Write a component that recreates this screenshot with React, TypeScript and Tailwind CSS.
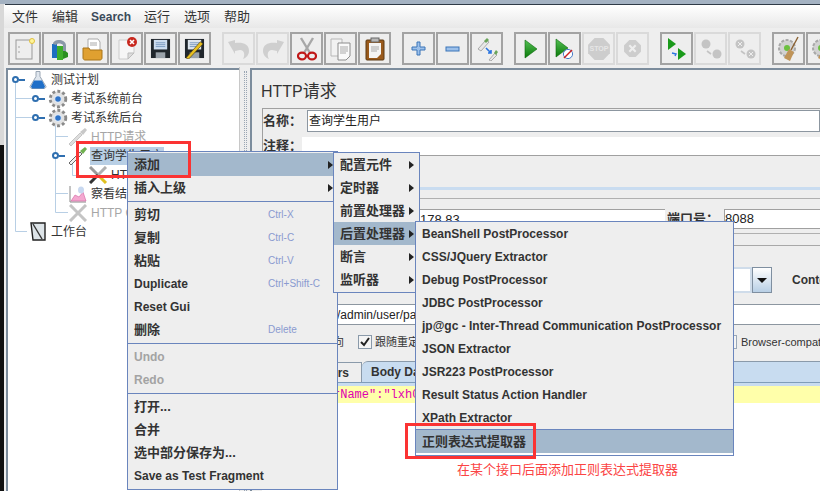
import type { ReactNode } from "react";

const ui = "font-['Liberation_Sans','Noto_Sans_CJK_SC',sans-serif]";

// toolbar icons, drawn small
const Sheet = () => (
  <svg width="22" height="24" viewBox="0 0 22 24">
    <rect x="2" y="3" width="16" height="19" fill="#eee" stroke="#999" />
    <circle cx="18" cy="4" r="2.5" fill="#fff59a" stroke="#e0c040" />
    <circle cx="5" cy="10" r="0.7" fill="#888" />
    <circle cx="5" cy="15" r="0.7" fill="#888" />
  </svg>
);
const Books = () => (
  <svg width="24" height="24" viewBox="0 0 24 24">
    <path d="M5 7h5v14H5z" fill="#1e6fc0" />
    <path d="M10 9h6v14h-6z" fill="#3dae2b" />
    <path d="M16 12l5 4v4l-5 2z" fill="#2a8f20" />
    <path d="M6 7c0-5 12-6 13 1v6h-3V8c-2-2-6-2-7 0z" fill="#8a98a8" />
  </svg>
);
const Folder = () => (
  <svg width="24" height="24" viewBox="0 0 24 24">
    <path d="M7 2h10l2 3v9H7z" fill="#fff" stroke="#aaa" />
    <path d="M9 6h7M9 8h7" stroke="#aaa" />
    <path d="M2 11h6l1 2h12v8c0 1-1 2-2 2H4c-1 0-2-1-2-2z" fill="#e0a030" stroke="#a87418" />
  </svg>
);
const CloseDoc = () => (
  <svg width="24" height="24" viewBox="0 0 24 24">
    <path d="M4 3h15v13l-6 6H4z" fill="#f6f6f6" stroke="#ccc" />
    <path d="M13 22v-6h6z" fill="#ddd" stroke="#bbb" />
    <circle cx="17" cy="5" r="5" fill="#c8281e" />
    <path d="M15 3l4 4M19 3l-4 4" stroke="#fff" strokeWidth="1.6" />
  </svg>
);
const Floppy = ({ pen }: { pen?: boolean }) => (
  <svg width="21" height="21" viewBox="0 0 22 22">
    <path d="M1 1h20v20H1z" fill="#20262c" />
    <rect x="4" y="2" width="14" height="10" fill={pen ? "#dfe6ee" : "#cdddf0"} />
    <path d="M6 5h10M6 7h10M6 9h10" stroke="#7a9ac0" />
    <rect x="6" y="15" width="10" height="6" fill="#9aa2aa" />
    {pen && <path d="M2 21L17 4l3 2L5 22z" fill="#e8c020" stroke="#3a2c10" strokeWidth="0.6" />}
  </svg>
);
const Curve = ({ flip }: { flip?: boolean }) => (
  <svg width="24" height="22" viewBox="0 0 24 22" style={flip ? { transform: "scaleX(-1)" } : undefined}>
    <path d="M1 4l7-2v3c8-1 14 1 14 8 0 4-3 7-6 8 2-3 2-9-3-9l-5 1v3z" fill="#cfcfcf" />
  </svg>
);
const Scissors = () => (
  <svg width="20" height="24" viewBox="0 0 20 24" fill="none">
    <path d="M4 1l9 15M16 1L7 16" stroke="#a8a8a8" strokeWidth="2.4" />
    <ellipse cx="5" cy="19" rx="4" ry="3.4" stroke="#c01818" strokeWidth="2.2" />
    <ellipse cx="15" cy="19" rx="4" ry="3.4" stroke="#c01818" strokeWidth="2.2" />
  </svg>
);
const Copy = () => (
  <svg width="24" height="24" viewBox="0 0 24 24">
    <path d="M2 2h11v17H2z" fill="#f2f2f2" stroke="#b8b8b8" />
    <path d="M9 6h12v13l-4 4H9z" fill="#fafafa" stroke="#8c8c8c" />
    <path d="M11 10h8M11 12h8M11 14h8M11 16h6" stroke="#aaa" />
  </svg>
);
const Clipboard = () => (
  <svg width="22" height="24" viewBox="0 0 22 24">
    <rect x="2" y="3" width="18" height="20" rx="1" fill="#9a5a1c" stroke="#5c3a14" />
    <path d="M5 6h12v11l-4 4H5z" fill="#f4f4f4" />
    <path d="M7 10h8M7 12h8M7 14h6" stroke="#aaa" />
    <rect x="7" y="1" width="8" height="4" fill="#b8b8b8" stroke="#666" />
  </svg>
);
const Plus = () => (
  <svg width="15" height="15" viewBox="0 0 15 15">
    <path d="M6 1h3v5h5v3H9v5H6V9H1V6h5z" fill="#9cc0ea" stroke="#3a74b8" />
  </svg>
);
const Minus = () => (
  <svg width="15" height="6" viewBox="0 0 15 6">
    <rect x="1" y="1" width="13" height="4" fill="#9cc0ea" stroke="#3a74b8" />
  </svg>
);
const Toggle = () => (
  <svg width="24" height="24" viewBox="0 0 24 24">
    <path d="M3 12l8-9 3 2-8 9z" fill="#e8e8e8" stroke="#aaa" />
    <path d="M9 4l3-3 2 2-3 3z" fill="#6aa55a" />
    <path d="M11 11l5 5M16 13v3h-3" stroke="#2a74e0" strokeWidth="1.6" fill="none" />
    <path d="M14 23l6-7 2 2-6 6z" fill="#e8e8e8" stroke="#aaa" />
    <path d="M19 16l2-3 2 2-2 3z" fill="#6aa55a" />
  </svg>
);
const Play = () => (
  <svg width="14" height="20" viewBox="0 0 14 20">
    <defs>
      <linearGradient id="g" x1="0" x2="0" y1="0" y2="1">
        <stop offset="0" stopColor="#55c055" />
        <stop offset="1" stopColor="#0a7a0a" />
      </linearGradient>
    </defs>
    <path d="M1 1l12 9L1 19z" fill="url(#g)" stroke="#0a6a0a" strokeWidth="0.6" />
  </svg>
);
const PlayNoTimer = () => (
  <svg width="20" height="22" viewBox="0 0 20 22">
    <path d="M1 1l12 9L1 19z" fill="url(#g)" stroke="#0a6a0a" strokeWidth="0.6" />
    <circle cx="13" cy="16" r="4.6" fill="#fff" stroke="#4a7cc8" />
    <path d="M9 20l8-8" stroke="#d02020" strokeWidth="1.4" />
  </svg>
);
const Stop = () => (
  <svg width="24" height="24" viewBox="0 0 22 22">
    <path d="M7 1h8l6 6v8l-6 6H7l-6-6V7z" fill="#cdcdcd" />
    <text x="11" y="13" textAnchor="middle" fontSize="6.5" fontWeight="700" fill="#e6e6e6" fontFamily="Liberation Sans">STOP</text>
  </svg>
);
const Shutdown = () => (
  <svg width="19" height="19" viewBox="0 0 18 18">
    <path d="M6 1h6l5 5v6l-5 5H6l-5-5V6z" fill="#cdcdcd" />
    <path d="M6 6l6 6M12 6l-6 6" stroke="#eee" strokeWidth="2" />
  </svg>
);
const RemoteStart = () => (
  <svg width="20" height="24" viewBox="0 0 20 24">
    <path d="M1 1l8 6-8 6z" fill="#1a9a1a" />
    <path d="M11 11l8 6-8 6z" fill="#1a9a1a" />
    <path d="M5 16l4 1-1 2" stroke="#2a74e0" fill="none" strokeWidth="1.4" />
  </svg>
);
const RemoteOff = ({ x }: { x?: boolean }) => (
  <svg width="22" height="22" viewBox="0 0 22 22">
    <circle cx="6" cy="6" r="4.5" fill="#c4c4c4" />
    <circle cx="17" cy="16" r="4.5" fill="#c4c4c4" />
    <path d="M7 13l4 3" stroke="#c4c4c4" strokeWidth="1.6" />
    {x && <path d="M4 4l4 4M8 4l-4 4M15 14l4 4M19 14l-4 4" stroke="#eee" />}
  </svg>
);
const Broom = () => (
  <svg width="26" height="26" viewBox="0 0 26 26">
    <circle cx="11" cy="12" r="8" fill="#d2d2d2" stroke="#a8a8a8" strokeDasharray="3 1.5" strokeWidth="2" />
    <circle cx="11" cy="12" r="3" fill="#6cc040" />
    <path d="M22 1l-7 13" stroke="#8a6030" strokeWidth="1.4" />
    <path d="M13 13l5 3-4 9-6-3z" fill="#c09458" />
  </svg>
);

const ToolButton = ({ children, off }: { children: ReactNode; off?: boolean }) => (
  <div className={`w-[33px] h-[33px] mr-px shrink-0 flex items-center justify-center border-2 bg-[#eeeeee] ${off ? "border-[#dadada]" : "border-[#a3a3a3]"}`}>
    {children}
  </div>
);

// tree icons
const Flask = () => (
  <svg width="18" height="19" viewBox="0 0 18 18">
    <path d="M7 1h4v5l6 10c0 1-1 2-2 2H3c-1 0-2-1-2-2L7 6z" fill="#dfe6ee" stroke="#9aa6b4" />
    <path d="M5 10h8l3 6-1 2H3l-1-2z" fill="#1f6fc8" />
  </svg>
);
const Gear = () => (
  <svg width="20" height="20" viewBox="0 0 18 18" className="shrink-0">
    <circle cx="9" cy="9" r="7" fill="#e2e2e2" stroke="#8a8a8a" strokeWidth="2.6" strokeDasharray="2.6 2" />
    <circle cx="9" cy="9" r="3" fill="#2f74c8" stroke="#dfe8f4" />
  </svg>
);
const Dropper = ({ off }: { off?: boolean }) => (
  <svg width="20" height="20" viewBox="0 0 20 20" className="shrink-0">
    <path d="M1 17L12 6l2 2L3 19z" fill={off ? "#ddd" : "#f0f0f0"} stroke={off ? "#bbb" : "#444"} strokeWidth="0.8" />
    <path d="M12 5l5-4 2 2-4 5z" fill={off ? "#c8c8c8" : "#70b050"} />
  </svg>
);
const Tools = ({ off }: { off?: boolean }) => (
  <svg width="20" height="18" viewBox="0 0 20 18" fill="none" className="shrink-0">
    <path d="M2 1l8 8" stroke={off ? "#c4c4c4" : "#9a9a9a"} strokeWidth="3" />
    <path d="M10 9l8 8" stroke={off ? "#c4c4c4" : "#e0c020"} strokeWidth="3" />
    <path d="M18 1l-8 8" stroke={off ? "#c4c4c4" : "#b0b0b0"} strokeWidth="3" />
    <path d="M10 9l-8 8" stroke={off ? "#c4c4c4" : "#333333"} strokeWidth="3" />
  </svg>
);
const ChartIcon = () => (
  <svg width="18" height="18" viewBox="0 0 18 18">
    <path d="M1 1v16h16" stroke="#888" fill="none" />
    <path d="M2 16l4-6 4 2 4-5 3 9z" fill="#f4a8d0" stroke="#d060a0" strokeWidth="0.6" />
    <ellipse cx="12" cy="5" rx="3" ry="3.5" fill="#c8d8f0" />
  </svg>
);
const Bench = () => (
  <svg width="16" height="19" viewBox="0 0 16 19">
    <path d="M1 1h14v17H3z" fill="#dde4e8" stroke="#222" strokeWidth="1.4" />
    <path d="M3 2l9 15" stroke="#333" strokeWidth="1.4" />
  </svg>
);

type TreeRowProps = { icon: ReactNode; label: string; indent: string; dim?: boolean; knob?: boolean; selected?: boolean };

const TreeRow = ({ icon, label, indent, dim, knob, selected }: TreeRowProps) => (
  <div className={`relative h-[19px] flex items-center gap-[3px] whitespace-nowrap ${indent}`}>
    {knob && (
      <span className="absolute -ml-[17px] flex items-center">
        <span className="w-[7px] h-[7px] rounded-full border-2 border-[#2f6fb0] bg-white" />
        <span className="w-[6px] h-[2px] bg-[#2f6fb0]" />
      </span>
    )}
    <span className="w-[18px] flex justify-center shrink-0">{icon}</span>
    <span className={`text-[12px] px-px h-[18px] leading-[18px] ${dim ? "text-[#a6a6a6]" : "text-[#333333]"} ${selected ? "bg-[#b8cfe5]" : ""}`}>{label}</span>
  </div>
);

const Tree = () => (
  <div className="relative w-[233px] ml-[2px] mt-px shrink-0 border-t-2 border-l-2 border-[#7c8c9c] bg-white overflow-hidden">
    {/* connector lines, panel origin is at 8,70 */}
    <svg className="absolute left-0 top-0" width="120" height="180" fill="none" stroke="#b8cfe5">
      <path d="M7.5 13V161.5H19M7.5 28.5H24M7.5 47.5H24M47.5 52V142.5H60M47.5 66.5H60M47.5 123.5H60M64.5 90V105.5H80" />
    </svg>
    <TreeRow icon={<Flask />} label="测试计划" indent="pl-[21px]" knob />
    <TreeRow icon={<Gear />} label="考试系统前台" indent="pl-[41px]" knob />
    <TreeRow icon={<Gear />} label="考试系统后台" indent="pl-[41px]" knob />
    <TreeRow icon={<Dropper off />} label="HTTP请求" indent="pl-[61px]" dim />
    <TreeRow icon={<Dropper />} label="查询学生用户" indent="pl-[61px]" knob selected />
    <TreeRow icon={<Tools />} label="HTTP信息头管理器" indent="pl-[81px]" />
    <TreeRow icon={<ChartIcon />} label="察看结果树" indent="pl-[61px]" />
    <TreeRow icon={<Tools off />} label="HTTP Cookie 管理器" indent="pl-[61px]" dim />
    <TreeRow icon={<Bench />} label="工作台" indent="pl-[21px]" />
  </div>
);

type MenuItemProps = { label: string; hint?: string; arrow?: boolean; dim?: boolean; active?: boolean; cjk?: boolean };

const MenuItem = ({ label, hint, arrow, dim, active, cjk }: MenuItemProps) => (
  <div className={`h-[23px] flex items-center justify-between whitespace-nowrap ${active ? "bg-[#a3b8cc]" : ""}`}>
    <span className={`font-bold ${cjk ? "text-[13px]" : "text-[12px]"} ${dim ? "text-[#a3a3a3]" : "text-[#333333]"}`}>{label}</span>
    {hint && <span className="text-[10px] text-[#8a9ad0] w-[69px] shrink-0">{hint}</span>}
    {arrow && <span className="w-0 h-0 border-y-[4px] border-y-transparent border-l-[5px] border-l-[#222222]" />}
  </div>
);

const Divider = () => <div className="h-px bg-[#6a85bd]" />;

const MainMenu = () => (
  <div className={`absolute left-[127px] top-[151px] w-[211px] border border-[#6a85bd] bg-[#eeeeee] ${ui}`}>
    <div className="pt-px pb-[2px] [&>div]:pl-[6px] [&>div]:pr-[4px]">
      <MenuItem label="添加" arrow active cjk />
      <MenuItem label="插入上级" arrow cjk />
    </div>
    <Divider />
    <div className="pt-[2px] pb-px pl-[6px] [&>div]:pb-[2px]">
      <MenuItem label="剪切" hint="Ctrl-X" cjk />
      <MenuItem label="复制" hint="Ctrl-C" cjk />
      <MenuItem label="粘贴" hint="Ctrl-V" cjk />
      <MenuItem label="Duplicate" hint="Ctrl+Shift-C" />
      <MenuItem label="Reset Gui" />
      <MenuItem label="删除" hint="Delete" cjk />
    </div>
    <Divider />
    <div className="pt-[2px] pb-px px-[6px] [&>div]:pb-[2px]">
      <MenuItem label="Undo" dim />
      <MenuItem label="Redo" dim />
    </div>
    <Divider />
    <div className="pt-[2px] pb-px px-[6px] [&>div]:pb-[2px]">
      <MenuItem label="打开..." cjk />
      <MenuItem label="合并" cjk />
      <MenuItem label="选中部分保存为..." cjk />
      <MenuItem label="Save as Test Fragment" />
    </div>
  </div>
);

const SubMenu = () => (
  <div className={`absolute left-[333px] top-[152px] w-[87px] border border-[#6a85bd] bg-[#eeeeee] pb-px ${ui} [&>div]:pl-[6px] [&>div]:pr-[5px]`}>
    <MenuItem label="配置元件" arrow cjk />
    <MenuItem label="定时器" arrow cjk />
    <MenuItem label="前置处理器" arrow cjk />
    <MenuItem label="后置处理器" arrow active cjk />
    <MenuItem label="断言" arrow cjk />
    <MenuItem label="监听器" arrow cjk />
  </div>
);

const PostMenu = () => (
  <div className={`absolute left-[415px] top-[221px] w-[319px] border border-[#6a85bd] bg-[#eeeeee] ${ui}`}>
    <div className="[&>div]:px-[6px]">
      <MenuItem label="BeanShell PostProcessor" />
      <MenuItem label="CSS/JQuery Extractor" />
      <MenuItem label="Debug PostProcessor" />
      <MenuItem label="JDBC PostProcessor" />
      <MenuItem label="jp@gc - Inter-Thread Communication PostProcessor" />
      <MenuItem label="JSON Extractor" />
      <MenuItem label="JSR223 PostProcessor" />
      <MenuItem label="Result Status Action Handler" />
      <MenuItem label="XPath Extractor" />
    </div>
    <Divider />
    <div className="[&>div]:px-[6px]">
      <MenuItem label="正则表达式提取器" active cjk />
    </div>
    <div className="h-[2px] bg-white" />
  </div>
);

const Detail = () => (
  <div className="flex-1 min-w-0 mt-px border-l-2 border-t-2 border-[#7c8c9c] flex flex-col text-[#333333] overflow-hidden">
    <div className="h-[38px] pl-[9px] pt-[10px] text-[16px] leading-[24px] text-[#333333]">
      HTTP<span className="text-[17px]">请求</span>
    </div>
    <div className="ml-[10px] h-[48px] border border-r-0 border-[#a0a0a0]">
      <div className="flex items-center h-[24px]">
        <span className="text-[13px] font-bold w-[44px] shrink-0">名称：</span>
        <div className="flex-1 h-[22px] flex items-center border border-[#8c96a0] bg-white pl-px text-[12px] text-[#222222]">查询学生用户</div>
      </div>
      <div className="flex items-center h-[18px] mt-[4px]">
        <span className="text-[13px] font-bold w-[39px] shrink-0">注释：</span>
        <div className="flex-1 h-[18px] bg-white" />
      </div>
    </div>
    <div className="h-[31px] shrink-0" />
    <div className="ml-[10px] h-[3px] shrink-0 bg-[#c9dcf0]" />
    <div className="h-[8px] shrink-0" />
    <div className="ml-[10px] h-[36px] shrink-0 border-y border-[#b0b0b0] flex items-start pt-[10px]">
      <div className="ml-[76px] w-[327px] h-[20px] border-t border-[#a0a0a0] bg-white flex items-center pl-[82px] text-[13px] text-[#222222]">178.83</div>
      <span className="w-[59px] shrink-0 pl-[2px] text-[13px] font-bold">端口号：</span>
      <div className="flex-1 h-[20px] border border-r-0 border-[#a0a0a0] bg-white flex items-center text-[13px] text-[#222222]">8088</div>
    </div>
    <div className="h-[11px] shrink-0" />
    <div className="ml-[10px] h-px shrink-0 bg-[#a8a8a8]" />
    <div className="h-[21px] shrink-0" />
    <div className="ml-[10px] flex items-center h-[26px] shrink-0 whitespace-nowrap">
      <div className="ml-[76px] w-[414px] h-[26px] shrink-0 bg-white border-2 border-[#cfdcea]" />
      <div className="w-[20px] h-[26px] shrink-0 border border-[#7f8fa0] bg-gradient-to-b from-white to-[#b8cfe5] flex items-center justify-center">
        <span className="w-0 h-0 border-x-[5px] border-x-transparent border-t-[5px] border-t-[#111111]" />
      </div>
      <span className="ml-[20px] text-[12px] font-bold">Content encoding:</span>
    </div>
    <div className="h-[11px] shrink-0" />
    <div className="ml-[10px] h-[21px] shrink-0 border-y border-[#8c96a0] bg-white flex items-center pl-[75px] text-[12px] text-[#222222]">/admin/user/page</div>
    <div className="h-[6px] shrink-0" />
    <div className="ml-[10px] h-[22px] shrink-0 flex items-center whitespace-nowrap text-[11px] text-[#333333]">
      <span className="w-[82px] text-right shrink-0">自动重定向</span>
      <span className="ml-[14px] w-[14px] h-[14px] shrink-0 border border-[#8a9aaa] bg-[#f4f4f4] flex items-center justify-center">
        <svg width="10" height="10" viewBox="0 0 10 10" fill="none"><path d="M1 5l3 3 5-7" stroke="#222222" strokeWidth="2" /></svg>
      </span>
      <span className="ml-[3px] w-[348px] shrink-0">跟随重定向</span>
      <span className="w-[14px] h-[14px] shrink-0 border border-[#9aa8b8] bg-[#f4f4f4]" />
      <span className="ml-[4px]">Browser-compatible headers</span>
    </div>
    <div className="h-[8px] shrink-0" />
    <div className="ml-[10px] h-[21px] shrink-0 flex items-end text-[12px] font-bold whitespace-nowrap">
      <div className="w-[100px] h-[20px] shrink-0 border border-b-0 border-[#8a9aaa] flex items-center justify-end pr-[12px]">Parameters</div>
      <div className="flex-1 h-[21px] bg-[#c8dcf0] border-t border-[#8a9aaa] rounded-tl-[6px] flex items-center pl-[9px]">Body Data</div>
    </div>
    <div className="ml-[10px] h-px shrink-0 bg-[#7f9db9]" />
    <div className="ml-[10px] h-[3px] shrink-0 bg-[#c8dcf0]" />
    <div className="ml-[10px] h-[17px] shrink-0 bg-[#ffffaa] pl-[35px] flex items-center font-['Liberation_Mono',monospace] text-[12px] text-[#e000b0] whitespace-pre">{'{"userName":"lxh0'}</div>
    <div className="ml-[10px] flex-1 bg-white" />
  </div>
);

const App = () => {
  const groups: [ReactNode, boolean?][][] = [
    [[<Sheet />], [<Books />], [<Folder />], [<CloseDoc />], [<Floppy />], [<Floppy pen />]],
    [[<Curve />, true], [<Curve flip />, true], [<Scissors />], [<Copy />], [<Clipboard />]],
    [[<Plus />], [<Minus />], [<Toggle />]],
    [[<Play />], [<PlayNoTimer />], [<Stop />, true], [<Shutdown />, true]],
    [[<RemoteStart />], [<RemoteOff />, true], [<RemoteOff x />, true]],
    [[<Broom />], [<Broom />]],
  ];

  return (
    <div className={`relative w-[820px] h-[491px] overflow-hidden bg-[#eeeeee] ${ui}`}>
      <div className="h-[4px] bg-[#a4b2c2]" />
      <div className="flex h-[487px]">
        {/* bit of the desktop left of the window */}
        <div className="w-[4px] shrink-0 flex flex-col">
          <div className="h-[141px] bg-[#d8d8d8]" />
          <div className="flex-1 bg-[#111111]" />
        </div>
        <div className="flex-1 min-w-0 flex flex-col">
          <div className="h-px ml-px bg-[#2f3a46]" />
          <div className="h-[23px] bg-gradient-to-b from-white to-[#e8e8e8] flex items-center pl-[8px] gap-[14px] text-[13px] text-[#333333]">
            <span>文件</span>
            <span>编辑</span>
            <span className="text-[12px] font-bold text-[#3a4a5a] -ml-px">Search</span>
            <span className="-ml-px">运行</span>
            <span>选项</span>
            <span>帮助</span>
          </div>
          <div className="h-[39px] flex items-start pt-[4px] pl-[4px] gap-[10px] overflow-hidden">
            {groups.map((group, i) => (
              <div key={i} className="flex">
                {group.map(([icon, off], j) => (
                  <ToolButton key={j} off={off}>{icon}</ToolButton>
                ))}
              </div>
            ))}
          </div>
          <div className="flex-1 flex min-h-0">
            <Tree />
            <div className="w-[11px] shrink-0 flex justify-center pt-[4px] border-l border-[#c8c8c8]">
              <div className="w-[3px] h-full border-x border-dotted border-[#9aa6b4]" />
            </div>
            <Detail />
          </div>
        </div>
      </div>

      <MainMenu />
      <SubMenu />
      <PostMenu />

      {/* red marks added on top of the screenshot */}
      <div className="absolute left-[76px] top-[141px] w-[115px] h-[37px] border-[3px] border-[#fb3333]" />
      <div className="absolute left-[405px] top-[423px] w-[131px] h-[36px] border-[3px] border-[#fb3333]" />
      <div className="absolute left-[457px] top-[460px] text-[13px] text-[#fb4444] whitespace-nowrap">在某个接口后面添加正则表达式提取器</div>
    </div>
  );
};

export default App;
